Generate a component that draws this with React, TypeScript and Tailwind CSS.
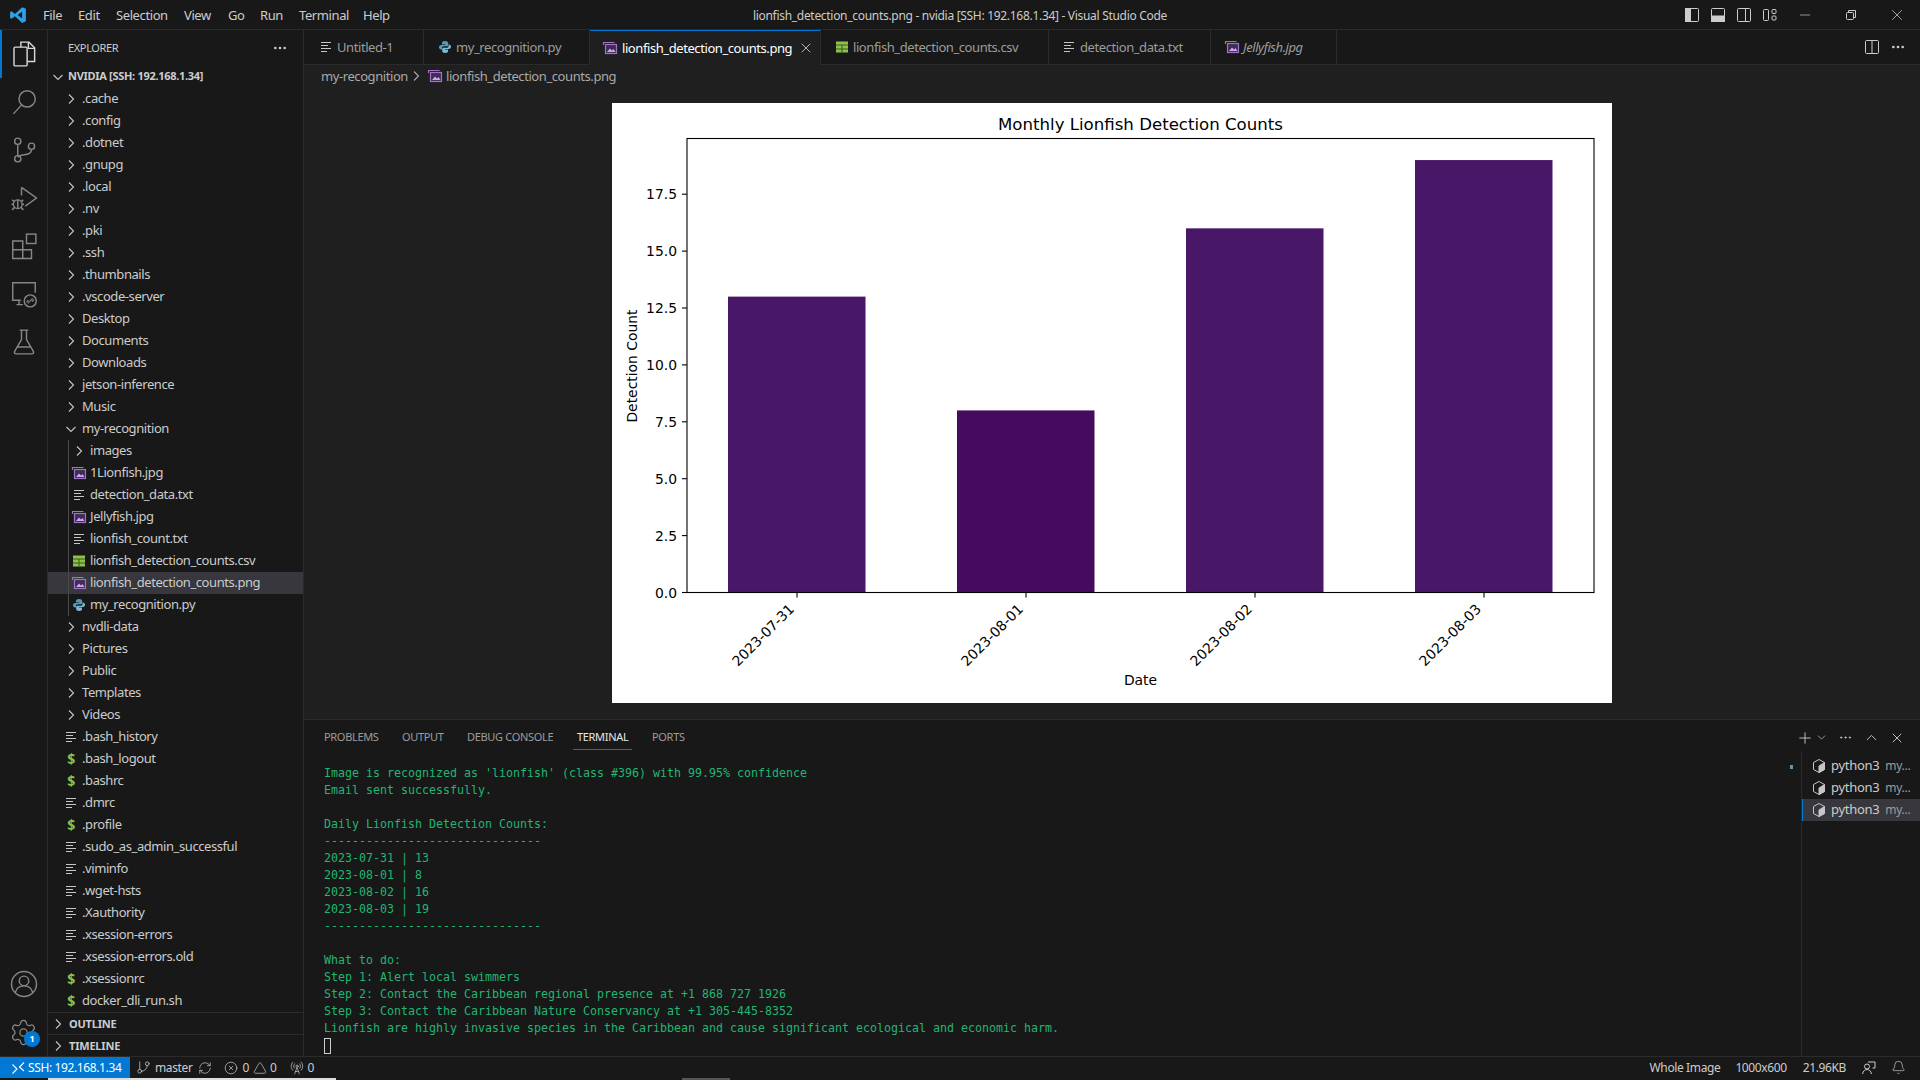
import React from "react";
import { Bell, ChevronDown, ChevronUp, CircleX, Ellipsis, GitBranch, Minus, Plus, RadioTower, RefreshCw, Settings, Triangle, X } from "lucide-react";

const UI = "font-['Noto_Sans','Open_Sans',sans-serif]";

function Chevron({ open = false, color = "#c5c5c5" }: { open?: boolean; color?: string }) {
  return (
    <svg width="16" height="16" viewBox="0 0 16 16" fill="none" stroke={color} strokeWidth="1.1" className="shrink-0">
      {open ? <path d="M3.5 6 8 10.5 12.5 6" /> : <path d="M6 3.5 10.5 8 6 12.5" />}
    </svg>
  );
}

function TextIcon() {
  return (
    <svg width="16" height="16" viewBox="0 0 16 16" stroke="#c5c5c5" strokeWidth="1.2" className="shrink-0">
      <path d="M3 3.5h10M3 6.5h7M3 9.5h10M3 12.5h6" />
    </svg>
  );
}

function ImageIcon() {
  return (
    <svg width="16" height="16" viewBox="0 0 16 16" fill="none" className="shrink-0">
      <path d="M1.500 5V2.500h11" stroke="#a074c4" strokeWidth="1.2" />
      <rect x="3.500" y="4.500" width="11" height="9" fill="#3f2b56" stroke="#a074c4" strokeWidth="1.2" />
      <path d="M5 12l3-3.500 2 2 1.500-1.500 2 3z" fill="#c9a7e8" />
    </svg>
  );
}

function CsvIcon() {
  return (
    <svg width="16" height="16" viewBox="0 0 16 16" className="shrink-0">
      <rect x="2" y="2.500" width="12" height="11" fill="#8dc149" />
      <path d="M2 6h12M2 10h12M8 6v7.500" stroke="#3d5a1c" strokeWidth="1" />
    </svg>
  );
}

function PyIcon() {
  return (
    <svg width="16" height="16" viewBox="0 0 16 16" className="shrink-0">
      <path d="M8 2C5.500 2 5 3 5 4v1.500h3.200V6H4C2.800 6 2 7 2 8.200S2.800 10.500 4 10.500h1V9c0-1 .8-1.800 2-1.800h3c.8 0 1.200-.6 1.200-1.300V4C11.200 2.800 10 2 8 2z" fill="#519aba" />
      <path d="M8 14c2.500 0 3-1 3-2v-1.500H7.800V10H12c1.200 0 2-1 2-2.200S13.200 5.500 12 5.500h-.4V7c0 1-.8 1.800-2 1.800H6.500c-.8 0-1.300.6-1.300 1.300V12c0 1.200 1 2 2.800 2z" fill="#7fb9d3" />
    </svg>
  );
}

function Dollar() {
  return <span className="w-4 text-center text-[14px] font-bold text-[#8dc149] shrink-0 leading-none">$</span>;
}

type Kind = "dir" | "open" | "txt" | "img" | "csv" | "py" | "sh";

function KindIcon({ kind }: { kind: Kind }) {
  if (kind === "dir") return <Chevron />;
  if (kind === "open") return <Chevron open />;
  if (kind === "txt") return <TextIcon />;
  if (kind === "img") return <ImageIcon />;
  if (kind === "csv") return <CsvIcon />;
  if (kind === "py") return <PyIcon />;
  return <Dollar />;
}

function Row({ name, kind, deep = false, selected = false }: { name: string; kind: Kind; deep?: boolean; selected?: boolean }) {
  return (
    <div className={`flex items-center h-[22px] text-[13px] tracking-[-0.42px] text-[#cccccc] ${deep ? "pl-[23px]" : "pl-[15px]"} ${selected ? "bg-[#37373d]" : ""}`}>
      <KindIcon kind={kind} />
      <span className="ml-[3px] whitespace-nowrap">{name}</span>
    </div>
  );
}

const beforeRows: [string, Kind][] = [
  [".cache", "dir"], [".config", "dir"], [".dotnet", "dir"], [".gnupg", "dir"], [".local", "dir"], [".nv", "dir"], [".pki", "dir"], [".ssh", "dir"], [".thumbnails", "dir"], [".vscode-server", "dir"], ["Desktop", "dir"], ["Documents", "dir"], ["Downloads", "dir"], ["jetson-inference", "dir"], ["Music", "dir"], ["my-recognition", "open"],
];
const innerRows: [string, Kind][] = [
  ["images", "dir"], ["1Lionfish.jpg", "img"], ["detection_data.txt", "txt"], ["Jellyfish.jpg", "img"], ["lionfish_count.txt", "txt"], ["lionfish_detection_counts.csv", "csv"], ["lionfish_detection_counts.png", "img"], ["my_recognition.py", "py"],
];
const afterRows: [string, Kind][] = [
  ["nvdli-data", "dir"], ["Pictures", "dir"], ["Public", "dir"], ["Templates", "dir"], ["Videos", "dir"], [".bash_history", "txt"], [".bash_logout", "sh"], [".bashrc", "sh"], [".dmrc", "txt"], [".profile", "sh"], [".sudo_as_admin_successful", "txt"], [".viminfo", "txt"], [".wget-hsts", "txt"], [".Xauthority", "txt"], [".xsession-errors", "txt"], [".xsession-errors.old", "txt"], [".xsessionrc", "sh"], ["docker_dli_run.sh", "sh"],
];

function ActIcon({ children, active = false }: { children: React.ReactNode; active?: boolean }) {
  return (
    <div className={`h-12 flex items-center justify-center relative ${active ? "text-[#d7d7d7]" : "text-[#868686]"}`}>
      {active && <div className="absolute left-0 top-0 bottom-0 w-[2px] bg-[#0078d4]" />}
      <svg width="30" height="30" viewBox="0 0 24 24" fill="none" stroke="currentColor" strokeWidth="1.15">{children}</svg>
    </div>
  );
}

function ActivityBar() {
  return (
    <div className="w-12 shrink-0 flex flex-col justify-between bg-[#181818] border-r border-[#2b2b2b]">
      <div>
        <ActIcon active>
          <path d="M9.500 6.500V2.500h6.500l4.500 4.500v11h-6" />
          <path d="M15.500 2.500v5h5" />
          <rect x="4" y="6.500" width="10.500" height="15" rx="1" />
        </ActIcon>
        <ActIcon>
          <circle cx="14.500" cy="9.500" r="6.500" />
          <path d="M10 14.500 3.500 21.500" />
        </ActIcon>
        <ActIcon>
          <circle cx="7" cy="5" r="2.500" />
          <circle cx="7" cy="19" r="2.500" />
          <circle cx="18" cy="9" r="2.500" />
          <path d="M7 7.500v9M18 11.500c0 3-3 4-6 4.300-2.500.3-4 .8-5 2" />
        </ActIcon>
        <ActIcon>
          <path d="M10 3.500 22 12l-9 6.500M10 3.500V10" />
          <circle cx="7" cy="17" r="3.500" />
          <path d="M2.500 13.500l2 1.500M11.500 13.500l-2 1.500M2 17h1.500M10.500 17H12M2.500 21.500l2-2M11.500 21.500l-2-2M7 13.500v7" />
        </ActIcon>
        <ActIcon>
          <path d="M3 8h8v14H3zM3 15h15v7h-7" />
          <rect x="14" y="2.500" width="7.500" height="7.500" />
        </ActIcon>
        <ActIcon>
          <path d="M9.500 17H3V3h18v8M6 20.500h5M8 17v3" />
          <circle cx="17" cy="17.500" r="4.800" />
          <path d="M15 19.500l4-4M15.500 17l-1.500 1.500M18.500 18l1.500-1.500" strokeWidth="1" />
        </ActIcon>
        <ActIcon>
          <path d="M8.500 2.500h7M10 2.500V10l-5.500 9.500c-.5 1 0 2 1.200 2h12.600c1.200 0 1.700-1 1.200-2L14 10V2.500M7 16h10" />
        </ActIcon>
      </div>
      <div>
        <ActIcon>
          <circle cx="12" cy="12" r="10" />
          <circle cx="12" cy="9.500" r="3.800" />
          <path d="M5 19c1-4 4-5.500 7-5.500s6 1.500 7 5.500" />
        </ActIcon>
        <div className="h-12 flex items-center justify-center relative text-[#868686]">
          <Settings size={29} strokeWidth={1.05} />
          <div className="absolute left-[24px] top-[23px] w-4 h-4 rounded-full bg-[#0078d4] text-white text-[9px] font-bold flex items-center justify-center">1</div>
        </div>
      </div>
    </div>
  );
}

function Sidebar() {
  return (
    <div className={`w-[256px] shrink-0 flex flex-col bg-[#181818] border-r border-[#2b2b2b] ${UI}`}>
      <div className="h-[35px] flex items-center justify-between pl-5 pr-[15px] text-[11px] text-[#cccccc] tracking-[-0.35px]">
        <span className="pt-[2px]">EXPLORER</span>
        <Ellipsis size={16} className="text-[#cccccc]" />
      </div>
      <div className="h-[23px] flex items-center pl-[2px] text-[11px] font-bold text-[#cccccc] tracking-[-0.3px]">
        <Chevron open />
        <span className="ml-[2px]">NVIDIA [SSH: 192.168.1.34]</span>
      </div>
      <div className="flex-1 min-h-0">
        {beforeRows.map(([n, k]) => <Row key={n} name={n} kind={k} />)}
        <div className="relative">
          {innerRows.map(([n, k]) => <Row key={n} name={n} kind={k} deep selected={n === "lionfish_detection_counts.png"} />)}
          <div className="absolute left-5 top-0 bottom-0 w-px bg-[#4a4a4a]" />
        </div>
        {afterRows.map(([n, k]) => <Row key={n} name={n} kind={k} />)}
      </div>
      <div className="h-[22px] flex items-center border-t border-[#2b2b2b] pl-[2px] text-[11px] font-bold text-[#cccccc] tracking-[-0.2px]">
        <Chevron /><span className="ml-[3px] pt-[2px]">OUTLINE</span>
      </div>
      <div className="h-[22px] flex items-center border-t border-[#2b2b2b] pl-[2px] text-[11px] font-bold text-[#cccccc] tracking-[-0.2px]">
        <Chevron /><span className="ml-[3px] pt-[2px]">TIMELINE</span>
      </div>
    </div>
  );
}

function Tab({ w, pl, icon, label, active = false, italic = false }: { w: string; pl: string; icon: React.ReactNode; label: string; active?: boolean; italic?: boolean }) {
  return (
    <div className={`${w} ${pl} h-full shrink-0 flex items-center border-r border-[#2b2b2b] text-[13px] tracking-[-0.42px] ${active ? "bg-[#1f1f1f] border-t border-t-[#0078d4] text-white" : "bg-[#181818] border-b border-b-[#2b2b2b] text-[#9d9d9d]"} ${italic ? "italic" : ""}`}>
      {icon}
      <span className={`${active ? "ml-[4px]" : "ml-[3px]"} pt-[2px] whitespace-nowrap flex-1`}>{label}</span>
      {active && <X size={16} strokeWidth={1.3} className="mr-[6px] text-[#cccccc]" />}
    </div>
  );
}

function Chart() {
  const yTicks = ["0.0", "2.5", "5.0", "7.5", "10.0", "12.5", "15.0", "17.5"];
  const bars = [
    { x: 116, v: 13, c: "#481767", d: "2023-07-31" },
    { x: 345, v: 8, c: "#450b5f", d: "2023-08-01" },
    { x: 574, v: 16, c: "#481767", d: "2023-08-02" },
    { x: 803, v: 19, c: "#481767", d: "2023-08-03" },
  ];
  const base = 489.5;
  const unit = 22.76;
  return (
    <svg width="1000" height="600" viewBox="0 0 1000 600" className="block shrink-0 bg-white" fontFamily="'DejaVu Sans', sans-serif" fill="#000">
      <text x="528.500" y="27" textAnchor="middle" fontSize="16.600">Monthly Lionfish Detection Counts</text>
      {bars.map((b) => (
        <rect key={b.d} x={b.x} y={base - b.v * unit} width="137.500" height={b.v * unit} fill={b.c} />
      ))}
      <rect x="75" y="35.500" width="907" height="454" fill="none" stroke="#000" strokeWidth="1.100" />
      {yTicks.map((t, i) => {
        const y = base - i * 2.5 * unit;
        return (
          <g key={t}>
            <path d={`M70 ${y}h5`} stroke="#000" strokeWidth="1.100" />
            <text x="65" y={y + 5} textAnchor="end" fontSize="13.900">{t}</text>
          </g>
        );
      })}
      {bars.map((b) => (
        <g key={b.d}>
          <path d={`M${b.x + 69} ${base}v5`} stroke="#000" strokeWidth="1.100" />
          <text transform={`translate(${b.x + 67} 507) rotate(-45)`} textAnchor="end" fontSize="13.900">{b.d}</text>
        </g>
      ))}
      <text x="528.500" y="582" textAnchor="middle" fontSize="13.900">Date</text>
      <text transform="translate(25 263) rotate(-90)" textAnchor="middle" fontSize="13.900">Detection Count</text>
    </svg>
  );
}

const termLines = [
  "Image is recognized as 'lionfish' (class #396) with 99.95% confidence",
  "Email sent successfully.",
  " ",
  "Daily Lionfish Detection Counts:",
  "-------------------------------",
  "2023-07-31 | 13",
  "2023-08-01 | 8",
  "2023-08-02 | 16",
  "2023-08-03 | 19",
  "-------------------------------",
  " ",
  "What to do:",
  "Step 1: Alert local swimmers",
  "Step 2: Contact the Caribbean regional presence at +1 868 727 1926",
  "Step 3: Contact the Caribbean Nature Conservancy at +1 305-445-8352",
  "Lionfish are highly invasive species in the Caribbean and cause significant ecological and economic harm.",
];

function TermRow({ selected = false }: { selected?: boolean }) {
  return (
    <div className={`h-[22px] flex items-center pl-[9px] ${selected ? "bg-[#37373d] shadow-[inset_1px_0_0_#0078d4]" : ""}`}>
      <svg width="16" height="16" viewBox="0 0 16 16" fill="none" stroke="#c5c5c5" strokeWidth="1" className="shrink-0">
        <path d="M8 1.500l5.500 3v7L8 14.500l-5.500-3v-7z" />
        <path d="M8 8l5.500-3.500v7L8 14.500z" fill="#c5c5c5" />
      </svg>
      <span className="ml-[4px] text-[13px] tracking-[-0.3px] text-[#cccccc]">python3</span>
      <span className="ml-[6px] text-[12px] tracking-[-0.3px] text-[#9d9d9d]">my...</span>
    </div>
  );
}

function Panel() {
  return (
    <div className={`h-[337px] shrink-0 flex flex-col bg-[#181818] border-t border-[#2b2b2b] ${UI}`}>
      <div className="h-[31px] shrink-0 flex items-stretch pl-5 pr-[15px] pt-[5px] pb-px text-[11px] tracking-[-0.32px] text-[#9d9d9d]">
        <div className="w-[78px] flex items-center">PROBLEMS</div>
        <div className="w-[65px] flex items-center">OUTPUT</div>
        <div className="w-[110px] flex items-center">DEBUG CONSOLE</div>
        <div className="w-[75px] flex items-center">
          <div className="h-full flex items-center text-[#e7e7e7] border-b border-[#0078d4] -mx-1 px-1">TERMINAL</div>
        </div>
        <div className="flex-1 flex items-center">PORTS</div>
        <div className="flex items-center text-[#cccccc]">
          <Plus size={18} strokeWidth={1.2} />
          <ChevronDown size={13} strokeWidth={1.3} className="ml-[1px]" />
          <Ellipsis size={15} strokeWidth={1.5} className="ml-[10px]" />
          <ChevronUp size={17} strokeWidth={1.3} className="ml-[10px]" />
          <X size={16} strokeWidth={1.4} className="ml-[9px]" />
        </div>
      </div>
      <div className="flex-1 min-h-0 flex">
        <div className="flex-1 min-w-0 relative pl-5 pt-[14px] font-['DejaVu_Sans_Mono',monospace] text-[11.63px] leading-[17px] text-[#22b573] whitespace-pre">
          {termLines.map((l, i) => <div key={i} className="h-[17px]">{l}</div>)}
          <div className="h-[17px] flex items-center"><div className="w-[7px] h-[16px] border border-[#cccccc]" /></div>
          <div className="absolute right-[8px] top-[14px] w-[3px] h-[4px] bg-[#5b97b8]" />
        </div>
        <div className="w-[119px] shrink-0 border-l border-[#2b2b2b] pt-[4px]">
          <TermRow />
          <TermRow />
          <TermRow selected />
        </div>
      </div>
    </div>
  );
}

function LayoutIcon({ children }: { children: React.ReactNode }) {
  return (
    <svg width="16" height="16" viewBox="0 0 16 16" fill="none" stroke="#cccccc" strokeWidth="1" className="shrink-0">{children}</svg>
  );
}

function TitleBar() {
  const menu: [string, string][] = [["File", "w-[35px]"], ["Edit", "w-[38px]"], ["Selection", "w-[68px]"], ["View", "w-[44px]"], ["Go", "w-[32px]"], ["Run", "w-[39px]"], ["Terminal", "w-[64px]"], ["Help", "w-[40px]"]];
  return (
    <div className={`h-[30px] shrink-0 flex items-center bg-[#181818] border-b border-[#2b2b2b] relative ${UI}`}>
      <svg width="18" height="18" viewBox="0 0 24 24" className="ml-[9px] mr-[16px] shrink-0">
        <path d="M17.500 1.500 8 10.500 3.500 7 1.500 8v8l2 1L8 13.500l9.500 9 5-2.200V3.800zM17.500 7.500v9L11.500 12z" fill="#2f9fe8" fillRule="evenodd" />
      </svg>
      <div className="flex pt-[2px] text-[13px] tracking-[-0.4px] text-[#cccccc]">
        {menu.map(([m, w]) => <div key={m} className={w}>{m}</div>)}
      </div>
      <div className="absolute left-0 right-0 top-[7px] text-center text-[12px] tracking-[-0.3px] text-[#cccccc] pointer-events-none">lionfish_detection_counts.png - nvidia [SSH: 192.168.1.34] - Visual Studio Code</div>
      <div className="ml-auto flex items-center">
        <div className="flex items-center gap-[10px] mr-[19px]">
          <LayoutIcon><rect x="1.500" y="1.500" width="13" height="13" rx="1" /><rect x="1.500" y="1.500" width="5" height="13" fill="#cccccc" /></LayoutIcon>
          <LayoutIcon><rect x="1.500" y="1.500" width="13" height="13" rx="1" /><rect x="1.500" y="9" width="13" height="5.500" fill="#cccccc" /></LayoutIcon>
          <LayoutIcon><rect x="1.500" y="1.500" width="13" height="13" rx="1" /><path d="M9.500 1.500v13" /></LayoutIcon>
          <LayoutIcon><rect x="1.500" y="2.500" width="5" height="11" rx="1" /><rect x="10" y="2.500" width="4" height="4" rx="1" /><rect x="10" y="9" width="4" height="4" rx="1" /></LayoutIcon>
        </div>
        <Minus size={16} strokeWidth={1} className="text-[#cccccc]" />
        <svg width="14" height="14" viewBox="0 0 14 14" fill="none" stroke="#cccccc" strokeWidth="1" className="ml-[31px]"><rect x="2.500" y="4.500" width="7" height="7" rx="1" /><path d="M4.500 4.500v-2h7v7h-2" /></svg>
        <X size={18} strokeWidth={1} className="ml-[30px] mr-[14px] text-[#cccccc]" />
      </div>
    </div>
  );
}

function Editor() {
  return (
    <div className={`flex-1 min-h-0 flex flex-col bg-[#1f1f1f] ${UI}`}>
      <div className="h-[35px] shrink-0 flex items-center bg-[#181818]">
        <Tab w="w-[120px]" pl="pl-[14px]" icon={<TextIcon />} label="Untitled-1" />
        <Tab w="w-[166px]" pl="pl-[13px]" icon={<PyIcon />} label="my_recognition.py" />
        <Tab w="w-[231px]" pl="pl-[12px]" icon={<ImageIcon />} label="lionfish_detection_counts.png" active />
        <Tab w="w-[228px]" pl="pl-[13px]" icon={<CsvIcon />} label="lionfish_detection_counts.csv" />
        <Tab w="w-[162px]" pl="pl-[12px]" icon={<TextIcon />} label="detection_data.txt" />
        <Tab w="w-[126px]" pl="pl-[13px]" icon={<ImageIcon />} label="Jellyfish.jpg" italic />
        <div className="flex-1 h-full flex items-center justify-end gap-[10px] pr-[14px] border-b border-[#2b2b2b]">
          <LayoutIcon><rect x="1.500" y="1.500" width="13" height="13" rx="1" /><path d="M8 1.500v13" /></LayoutIcon>
          <Ellipsis size={16} className="text-[#cccccc]" />
        </div>
      </div>
      <div className="h-[22px] shrink-0 flex items-center pl-[17px] text-[13px] tracking-[-0.42px] text-[#a9a9a9]">
        <span className="pt-px">my-recognition</span>
        <Chevron color="#a9a9a9" />
        <span className="ml-[3px]"><ImageIcon /></span>
        <span className="ml-[3px] pt-px">lionfish_detection_counts.png</span>
      </div>
      <div className="flex-1 min-h-0 flex items-center justify-center">
        <Chart />
      </div>
    </div>
  );
}

function StatusBar() {
  return (
    <div className={`h-[22px] shrink-0 flex items-center bg-[#181818] border-t border-[#2b2b2b] text-[12px] tracking-[-0.38px] text-[#cccccc] ${UI}`}>
      <div className="h-full w-[130px] flex items-center bg-[#0078d4] text-white pl-[11px]">
        <svg width="14" height="14" viewBox="0 0 14 14" fill="none" stroke="#ffffff" strokeWidth="1.100" className="shrink-0"><path d="M1.500 3.500 6 8l-4.500 4.500M13 1.500 8.500 6 13 10" /></svg>
        <span className="ml-[3px] whitespace-nowrap">SSH: 192.168.1.34</span>
      </div>
      <GitBranch size={15} strokeWidth={1.2} className="ml-[6px]" />
      <span className="ml-[4px]">master</span>
      <RefreshCw size={14} strokeWidth={1.2} className="ml-[6px]" />
      <CircleX size={14} strokeWidth={1.2} className="ml-[12px]" />
      <span className="ml-[4px]">0</span>
      <Triangle size={14} strokeWidth={1.2} className="ml-[4px]" />
      <span className="ml-[3px]">0</span>
      <RadioTower size={14} strokeWidth={1.2} className="ml-[14px]" />
      <span className="ml-[3px]">0</span>
      <div className="ml-auto flex items-center">
        <span>Whole Image</span>
        <span className="ml-[15px]">1000x600</span>
        <span className="ml-[16px]">21.96KB</span>
        <svg width="16" height="16" viewBox="0 0 16 16" fill="none" stroke="#cccccc" strokeWidth="1" className="ml-[15px]"><circle cx="6" cy="6.500" r="2.500" /><path d="M1.500 14c.5-3 2.500-4.500 4.500-4.500s4 1.500 4.500 4.500M7 2h7v6h-2.500" /></svg>
        <Bell size={15} strokeWidth={1.1} className="ml-[14px] mr-[14px]" />
      </div>
    </div>
  );
}

export default function App() {
  return (
    <div className="w-[1920px] h-[1080px] flex flex-col bg-[#181818] overflow-hidden">
      <TitleBar />
      <div className="h-[1026px] shrink-0 flex min-h-0">
        <ActivityBar />
        <Sidebar />
        <div className="flex-1 min-w-0 flex flex-col">
          <Editor />
          <Panel />
        </div>
      </div>
      <StatusBar />
      <div className="h-[2px] shrink-0 flex bg-[#181818]">
        <div className="ml-12 w-[288px] bg-[#dddddd]" />
        <div className="ml-[346px] w-12 bg-[#555555]" />
      </div>
    </div>
  );
}
